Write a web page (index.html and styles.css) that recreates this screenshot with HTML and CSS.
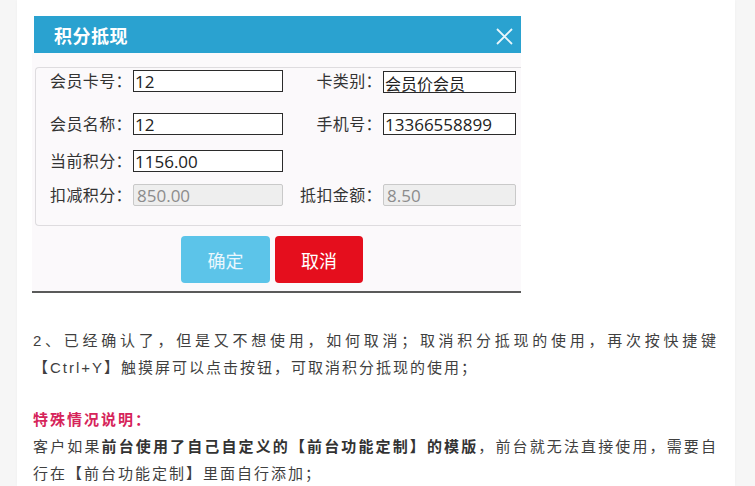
FILE: index.html
```html
<!DOCTYPE html>
<html lang="zh-CN">
<head>
<meta charset="utf-8">
<title>积分抵现</title>
<link rel="stylesheet" href="styles.css">
</head>
<body>
<div class="page">
  <div class="card">
    <div class="dialog">
      <div class="dlg-head">
        <span class="dlg-title">积分抵现</span>
        <svg class="dlg-close" width="17" height="17" viewBox="0 0 17 17"><path d="M1 1 L16 16 M16 1 L1 16" stroke="#e9f6fb" stroke-width="1.8" fill="none"/></svg>
      </div>
      <div class="dlg-body">
        <div class="group">
          <div class="lbl">会员卡号：</div><div class="inp">12</div>
          <div class="lbl">卡类别：</div><div class="inp inp-shift">会员价会员</div>
          <div class="lbl">会员名称：</div><div class="inp">12</div>
          <div class="lbl">手机号：</div><div class="inp">13366558899</div>
          <div class="lbl">当前积分：</div><div class="inp">1156.00</div>
          <div></div><div></div>
          <div class="lbl">扣减积分：</div><div class="inp inp-off">850.00</div>
          <div class="lbl">抵扣金额：</div><div class="inp inp-off">8.50</div>
        </div>
        <div class="btns">
          <div class="btn btn-ok">确定</div>
          <div class="btn btn-cancel">取消</div>
        </div>
      </div>
    </div>
    <div class="article">
      <p class="para">2、已经确认了，但是又不想使用，如何取消；取消积分抵现的使用，再次按快捷键【Ctrl+Y】触摸屏可以点击按钮，可取消积分抵现的使用；</p>
      <p class="para blank">&nbsp;</p>
      <p class="para note">特殊情况说明：</p>
      <p class="para">客户如果<strong>前台使用了自己自定义的【前台功能定制】的模版</strong>，前台就无法直接使用，需要自行在【前台功能定制】里面自行添加；</p>
    </div>
  </div>
</div>
</body>
</html>
```

FILE: styles.css
```css
html, body {
  margin: 0;
  padding: 0;
  height: 100%;
  overflow: hidden;
}
body {
  background: #f6f6f6;
  font-family: "Noto Sans CJK SC", "Noto Sans", sans-serif;
}
.page {
  display: flex;
  height: 100%;
}
.card {
  margin-left: 17px;
  width: 718px;
  background: #ffffff;
  padding: 16px 17px 0 15px;
  box-sizing: border-box;
  box-shadow: 0 0 3px rgba(0,0,0,0.03);
}
.dialog {
  width: 489px;
}
.dlg-head {
  height: 37px;
  background: #2aa2d0;
  margin-left: 2px;
  display: flex;
  align-items: center;
  justify-content: space-between;
  padding: 0 8px 0 20px;
}
.dlg-title {
  color: #ffffff;
  font-size: 18px;
  font-weight: bold;
  letter-spacing: 0.5px;
}
.dlg-close {
  display: block;
  margin-top: 3px;
}
.dlg-body {
  background: #fbf9fb;
  padding-top: 14px;
  padding-bottom: 8px;
  border-bottom: 2px solid #5a5a5a;
}
.group {
  margin-left: 3px;
  height: 159px;
  box-sizing: border-box;
  border: 1px solid #dedcdf;
  border-right: none;
  border-radius: 4px 0 0 4px;
  padding-top: 2px;
  display: grid;
  grid-template-columns: 97px 150px 100px 133px;
  grid-template-rows: 43px 37px 34px 22px;
  align-items: start;
}
.lbl {
  font-size: 16px;
  color: #333333;
  text-align: right;
  height: 22px;
  line-height: 20px;
  white-space: nowrap;
  letter-spacing: 0.4px;
  padding-right: 1px;
}
.inp {
  height: 22px;
  box-sizing: border-box;
  border: 1px solid #2b2b2b;
  background: #ffffff;
  font-family: "Open Sans", "Noto Sans CJK SC", sans-serif;
  font-size: 17px;
  line-height: 21px;
  color: #222222;
  padding-left: 1px;
  white-space: nowrap;
}
.inp-shift {
  margin-top: 1px;
  font-family: "Noto Sans CJK SC", sans-serif;
  font-size: 16px;
  line-height: 22px;
}
.inp-off {
  border-color: #c9c9c9;
  background: #eeeeee;
  color: #8c8c8c;
  border-radius: 2px;
  padding-left: 3px;
}
.btns {
  display: flex;
  gap: 5px;
  padding-left: 149px;
  margin-top: 10px;
}
.btn {
  height: 47px;
  border-radius: 4px;
  color: #ffffff;
  font-size: 18px;
  display: flex;
  align-items: center;
  justify-content: center;
}
.btn-ok {
  width: 89px;
  background: #5cc4e9;
  color: #eaf7fd;
}
.btn-cancel {
  width: 88px;
  background: #e50e1d;
}
.article {
  margin-top: 34px;
  padding-left: 1px;
}
.para {
  margin: 0;
  font-family: "Liberation Sans", "Noto Sans CJK SC", sans-serif;
  font-size: 15px;
  line-height: 27px;
  letter-spacing: 2px;
  color: #3f3f3f;
  text-align: justify;
}
.para strong {
  font-weight: bold;
  color: #333333;
}
.note {
  color: #d6245a;
  font-weight: bold;
}
.blank {
  height: 25px;
}
```
